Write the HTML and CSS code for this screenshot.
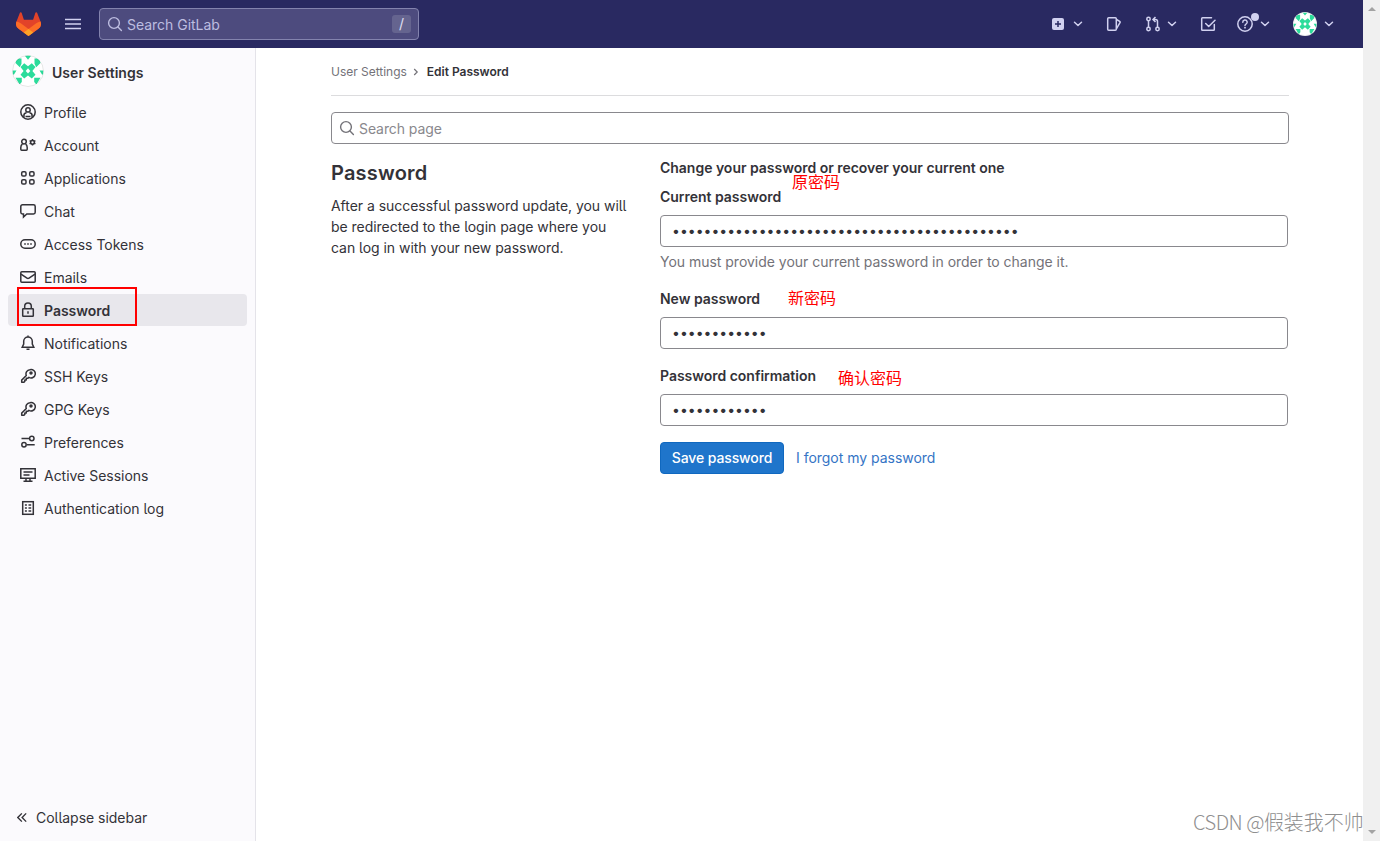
FILE: index.html
```html
<!DOCTYPE html>
<html lang="en">
<head>
<meta charset="utf-8">
<title>Edit Password · User Settings · GitLab</title>
<link rel="stylesheet" href="styles.css">
</head>
<body>
<svg class="defs" aria-hidden="true">
  <symbol id="chev" viewBox="0 0 10 6"><path d="M1.500 1.200 5 4.500 8.500 1.200" fill="none" stroke="currentColor" stroke-width="1.500" stroke-linecap="round" stroke-linejoin="round"/></symbol>
  <symbol id="search" viewBox="0 0 16 16"><circle cx="7" cy="7" r="5.400" fill="none" stroke="currentColor" stroke-width="1.400"/><path d="m11 11 3.400 3.400" fill="none" stroke="currentColor" stroke-width="1.400" stroke-linecap="round"/></symbol>
  <symbol id="key" viewBox="0 0 16 16"><path d="M9.900 1.700a4.200 4.200 0 1 1-1 7.600L7.700 10.300H6.300v1.700H4.800v1.400l-.9.900H1.700v-2.200l4.600-4.600A4.200 4.200 0 0 1 9.900 1.700Z" fill="none" stroke="currentColor" stroke-width="1.500" stroke-linejoin="round"/><circle cx="11" cy="5" r="1" fill="currentColor"/></symbol>
  <symbol id="avatar" viewBox="0 0 32 32">
    <clipPath id="round"><circle cx="16" cy="16" r="15.500"/></clipPath>
    <circle cx="16" cy="16" r="16" fill="#fff"/>
    <g clip-path="url(#round)" fill="#2bdc9b">
      <path d="M12.700.5h6.600L16 4.700ZM4.500 3.500h5v5.200l-1.700 3.500L3.500 8Zm23 0h-5v5.200l1.700 3.500L28.500 8ZM.5 15.500h4L2 19.500H.5Zm31 0h-4l2.500 4h1.500Z"/>
      <path d="M3.500 22.700h6.300v4.200l-2.200 2.600Zm25 0h-6.300v4.200l2.200 2.600Z"/>
      <path d="m12.200 8.200 3.800 3.100 3.800-3.100 3.700 3.800-3.100 3.900 3.100 3.900-3.700 3.700-3.800-3.100-3.800 3.100-3.700-3.700 3.100-3.900L8.500 12Z"/>
    </g>
    <path fill="#fff" d="m16 13.300 2.300 2.600-2.300 2.600-2.300-2.600Z"/>
    <circle cx="16" cy="16" r="15.500" fill="none" stroke="#000" stroke-opacity=".1"/>
  </symbol>
</svg>
<header class="topbar">
  <svg class="logo" viewBox="0 0 25 24"><path fill="#e24329" d="m24.500 9.500L21.100.7a.9.900 0 0 0-1.700.1L17.100 7.800H7.900L5.600.8a.9.900 0 0 0-1.700-.1L.5 9.500a6.300 6.300 0 0 0 2.100 7.300L12.500 24l9.900-7.200a6.300 6.300 0 0 0 2.100-7.300Z"/><path fill="#fc6d26" d="M24.500 9.500a11.400 11.400 0 0 0-4.600 2L12.500 17l-7.400-5.500a11.400 11.400 0 0 0-4.600-2 6.300 6.300 0 0 0 2.100 7.300l9.900 7.200 9.900-7.200a6.300 6.300 0 0 0 2.100-7.300Z"/><path fill="#fca326" d="m7.700 20.500 4.800 3.500 4.800-3.500-4.800-3.600Z"/></svg>
  <svg class="burger" viewBox="0 0 16 12"><path d="M0 1.500h16M0 6h16M0 10.500h16" stroke="currentColor" stroke-width="1.500"/></svg>
  <div class="global-search"><svg class="i16"><use href="#search"/></svg><span>Search GitLab</span><kbd>/</kbd></div>
  <nav class="tools">
    <span class="tool t-new"><svg class="i16" viewBox="0 0 16 16"><rect x="2" y="2" width="12" height="12" rx="2" fill="currentColor"/><path d="M8 5v6M5 8h6" stroke="#292961" stroke-width="1.500"/></svg><svg class="chev"><use href="#chev"/></svg></span>
    <span class="tool t-issues"><svg class="i16" viewBox="0 0 16 16" fill="none" stroke="currentColor" stroke-width="1.500" stroke-linejoin="round"><rect x="1.700" y="1.700" width="8.600" height="12.600" rx="1"/><path d="m10.500 3.500 3.200 1.800c.5.300.6.900.3 1.400l-3.500 6"/></svg></span>
    <span class="tool t-mr"><svg class="i16" viewBox="0 0 16 16" fill="none" stroke="currentColor" stroke-width="1.500"><circle cx="3.500" cy="3" r="1.700"/><circle cx="3.500" cy="13" r="1.700"/><circle cx="12.500" cy="13" r="1.700"/><path d="M3.500 5v6M12.500 11V5.500a2 2 0 0 0-2-2H8.500M10.500 1 8 3.500 10.500 6"/></svg><svg class="chev"><use href="#chev"/></svg></span>
    <span class="tool t-todo"><svg class="i16" viewBox="0 0 16 16" fill="none" stroke="currentColor" stroke-width="1.500" stroke-linecap="round" stroke-linejoin="round"><path d="M11.500 1.700h-9a.8.800 0 0 0-.8.800v11c0 .5.300.8.800.8h11c.5 0 .8-.3.800-.8V8.500M5.700 7.500l3 3 6.300-6.300"/></svg></span>
    <span class="tool t-help"><svg class="i16" viewBox="0 0 16 16" fill="none" stroke="currentColor" stroke-width="1.500"><circle cx="8" cy="8" r="7.200"/><path d="M5.800 6.300a2.200 2.200 0 1 1 3.200 1.900c-.7.400-1 .7-1 1.300" stroke-linecap="round"/><circle cx="8" cy="11.700" r=".9" fill="currentColor" stroke="none"/></svg><i class="dot"></i><svg class="chev"><use href="#chev"/></svg></span>
    <span class="tool t-user"><svg class="face"><use href="#avatar"/></svg><svg class="chev"><use href="#chev"/></svg></span>
  </nav>
</header>
<div class="scrollbar"><i class="up"></i><i class="down"></i></div>
<div class="layout">
  <aside class="sidebar">
    <div class="context"><svg class="avatar"><use href="#avatar"/></svg><strong>User Settings</strong></div>
    <ul class="menu">
      <li><svg viewBox="0 0 16 16"><circle cx="8" cy="8" r="7.200"/><circle cx="8" cy="5.900" r="2.200"/><path d="M3.900 13.500V12A3 3 0 0 1 6.500 8.700M12.100 13.500V12a3 3 0 0 0-2.600-3.300M5.500 12.500h5"/></svg><span>Profile</span></li>
      <li><svg viewBox="0 0 16 16"><circle cx="4" cy="4.600" r="2.300"/><path d="M2.500 7C1.500 7.600.8 8.800.8 10.500v1.700c0 .6.300 1 .9 1h4.600c.6 0 .9-.4.900-1v-1.700C7.200 8.800 6.500 7.600 5.500 7"/><circle cx="12.500" cy="5.300" r="1.900"/><path d="M12.500 2v1.500M12.500 7.100v1.500M9.600 3.700l1.300.7M14.100 6.200l1.300.7M15.400 3.700l-1.300.7M10.900 6.200l-1.300.7"/></svg><span>Account</span></li>
      <li><svg viewBox="0 0 16 16"><rect x="1.700" y="1.700" width="4.300" height="4.300" rx="1.300"/><rect x="9.700" y="1.700" width="4.300" height="4.300" rx="1.300"/><rect x="1.700" y="9.700" width="4.300" height="4.300" rx="1.300"/><rect x="9.700" y="9.700" width="4.300" height="4.300" rx="1.300"/></svg><span>Applications</span></li>
      <li><svg viewBox="0 0 16 16"><path d="M2.500 1.700h11c1 0 1.700.7 1.700 1.700v5.900c0 1-.7 1.700-1.700 1.700H6.800L3.500 14v-3h-1A1.700 1.700 0 0 1 .8 9.300V3.400c0-1 .7-1.700 1.700-1.700Z"/></svg><span>Chat</span></li>
      <li><svg viewBox="0 0 16 16"><rect x=".8" y="3.700" width="14.400" height="8.600" rx="4.200"/><path d="M4.200 8h1.600M7.200 8h1.600M10.200 8h1.600"/></svg><span>Access Tokens</span></li>
      <li><svg viewBox="0 0 16 16"><rect x=".8" y="2.700" width="14.400" height="10.600" rx="1"/><path d="m1 5.200 6 4c.6.400 1.400.4 2 0l6-4"/></svg><span>Emails</span></li>
      <li class="active"><svg viewBox="0 0 16 16"><rect x="2.700" y="6.700" width="10.600" height="7.600" rx=".6"/><path d="M4.700 6.500V4.300a3.300 3.300 0 0 1 6.600 0v2.200M8 9.300v2.400"/></svg><span>Password</span></li>
      <li><svg viewBox="0 0 16 16"><path d="M3.700 9V6.300a4.300 4.300 0 0 1 8.600 0V9l1.500 3.200H2.200ZM8 2V.5M6.500 14.200h3"/></svg><span>Notifications</span></li>
      <li><svg><use href="#key"/></svg><span>SSH Keys</span></li>
      <li><svg><use href="#key"/></svg><span>GPG Keys</span></li>
      <li><svg viewBox="0 0 16 16"><path d="M1.500 4.500h7.500M7 10.700h7.700"/><circle cx="11.800" cy="4.500" r="2.200"/><circle cx="4" cy="10.700" r="2.200"/></svg><span>Preferences</span></li>
      <li><svg viewBox="0 0 16 16"><path d="M.8 1.700h14.400v9.600H.8ZM3.500 5h9M3.500 8h6M6 11.500v2.500M10 11.500v2.500M3.500 14.200h9"/></svg><span>Active Sessions</span></li>
      <li><svg viewBox="0 0 16 16"><rect x="2.700" y="1.700" width="10.600" height="12.600"/><path d="M4.900 5h2M8.500 5h2.700M4.900 8h2M8.500 8h2.700M4.900 11h2M8.500 11h2.700"/></svg><span>Authentication log</span></li>
    </ul>
    <div class="collapse"><svg viewBox="0 0 12 12"><path d="M5.300 1.500.9 6l4.400 4.500M10 1.500 5.600 6l4.400 4.500"/></svg><span>Collapse sidebar</span></div>
  </aside>
  <main class="content">
    <nav class="crumbs"><span class="c1">User Settings</span><svg viewBox="0 0 6 8"><path d="m1.200 1 3 3-3 3"/></svg><b>Edit Password</b></nav>
    <div class="page-search"><svg class="i16"><use href="#search"/></svg><span>Search page</span></div>
    <div class="columns">
      <section class="intro"><h1>Password</h1><p><span>After a successful password update, you will</span><br><span>be redirected to the login page where you</span><br><span>can log in with your new password.</span></p></section>
      <form class="form">
        <h2>Change your password or recover your current one</h2>
        <label class="l1">Current password</label>
        <input type="password" value="glpat0123456789glpat0123456789glpat012345678">
        <p class="help">You must provide your current password in order to change it.</p>
        <label class="l2">New password</label>
        <input type="password" value="newpassword1">
        <label class="l3">Password confirmation</label>
        <input type="password" value="newpassword1">
        <div class="actions"><button type="button">Save password</button><a>I forgot my password</a></div>
      </form>
    </div>
  </main>
</div>
<div class="mark-box"></div>
<span class="note n1">原密码</span>
<span class="note n2">新密码</span>
<span class="note n3">确认密码</span>
<span class="watermark"><span class="latin">CSDN @</span>假装我不帅</span>
</body>
</html>
```

FILE: styles.css
```css
* { box-sizing: border-box; }
body { margin: 0; height: 841px; overflow: hidden; background: #fff; color: #333238; font: 14px/21px Inter, "Noto Sans", sans-serif; font-feature-settings: "cv05"; letter-spacing: -0.02px; display: grid; grid-template: 48px 793px / 1363px 17px; }
.defs { position: absolute; width: 0; height: 0; }
svg { display: block; flex: none; }
.i16 { width: 16px; height: 16px; }
.topbar { background: #292961; color: #d1d1f0; display: flex; align-items: center; padding-left: 16px; }
.logo { width: 25px; height: 24px; }
.burger { width: 16px; height: 12px; margin-left: 24px; }
.global-search { width: 320px; height: 32px; margin-left: 18px; padding: 0 7px; display: flex; align-items: center; border: 1px solid #8383ae; border-radius: 4px; background: #4d4b7e; color: #bdbde0; font-size: 14px; }
.global-search span { margin: 1px 0 0 4px; flex: 1; }
.global-search kbd { width: 19px; height: 18px; border-radius: 3px; background: #65648f; color: #e0e0f4; font: 14px/17px Inter, sans-serif; text-align: center; }
.tools { display: flex; align-items: center; margin-left: 631px; }
.tool { display: flex; align-items: center; position: relative; }
.chev { width: 10px; height: 6px; }
.t-new .chev { margin-left: 7px; }
.t-issues { margin-left: 23px; }
.t-mr { margin-left: 23px; }
.t-mr .chev { margin-left: 6px; }
.t-todo { margin-left: 23px; }
.t-help { margin-left: 21px; }
.t-help .chev { margin-left: 7px; }
.dot { position: absolute; left: 14px; top: -3px; width: 8px; height: 8px; border-radius: 50%; background: #d1d1f0; }
.t-user { margin-left: 23px; }
.t-user .chev { margin-left: 7px; }
.face { width: 24px; height: 24px; }
.scrollbar { grid-column: 2; grid-row: 1 / 3; background: #f0f0f0; display: flex; flex-direction: column; align-items: center; justify-content: space-between; padding: 7px 0 7px; }
.scrollbar i { border: 4px solid transparent; }
.scrollbar .up { border-top: 0; border-bottom-color: #a3a3a3; }
.scrollbar .down { border-bottom: 0; border-top-color: #a3a3a3; }
.layout { display: flex; grid-row: 2; grid-column: 1; }
.sidebar { width: 256px; background: #fbfafd; border-right: 1px solid #e4e3e9; display: flex; flex-direction: column; padding: 8px 8px 13px; }
.context { display: flex; align-items: center; height: 32px; padding-left: 4px; gap: 8px; }
.context strong { font-weight: 600; letter-spacing: 0.05px; }
.avatar { width: 32px; height: 32px; position: relative; top: -1px; }
.menu { list-style: none; margin: 8px 0 0; padding: 0; display: flex; flex-direction: column; gap: 1px; }
.menu li { height: 32px; display: flex; align-items: center; gap: 8px; padding-left: 12px; border-radius: 4px; }
.menu svg { width: 16px; height: 16px; fill: none; stroke: currentColor; stroke-width: 1.5; }
.menu .active { background: #e8e7ec; font-weight: 600; }
.collapse { margin-top: auto; display: flex; align-items: center; gap: 8px; padding-left: 9px; }
.collapse svg { width: 11px; height: 11px; fill: none; stroke: currentColor; stroke-width: 1.5; }
.content { width: 958px; margin-left: 75px; }
.crumbs { height: 48px; border-bottom: 1px solid #dcdcde; display: flex; align-items: center; font-size: 12px; color: #737278; }
.crumbs svg { width: 6px; height: 8px; margin: 0 8px 0 6px; fill: none; stroke: currentColor; stroke-width: 1.2; }
.crumbs b { font-weight: 600; color: #333238; }
.page-search { margin-top: 16px; height: 32px; border: 1px solid #89888d; border-radius: 4px; display: flex; align-items: center; padding-left: 7px; gap: 4px; color: #737278; }
.page-search span { color: #89888d; padding-top: 1px; letter-spacing: -0.08px; }
.columns { display: flex; }
.intro { width: 329px; }
h1 { margin: 16px 0 0; font-size: 20px; line-height: 26px; font-weight: 600; letter-spacing: 0.2px; }
.intro p { margin: 9px 0 0; white-space: nowrap; letter-spacing: -0.035px; }
.form { width: 628px; display: flex; flex-direction: column; }
h2 { margin: 13px 0 0; font-size: 14px; line-height: 21px; font-weight: 600; }
label { font-weight: 600; line-height: 21px; }
.l1 { margin: 8px 0 8px; }
.l2 { margin: 16px 0 8px; }
.l3 { margin: 16px 0 8px; }
input { height: 32px; border: 1px solid #89888d; border-radius: 4px; padding: 0 11px 2px; font: 14px Inter, sans-serif; color: #333238; background: #fff; }
.help { margin: 4px 0 0; color: #737278; }
.actions { display: flex; align-items: center; gap: 12px; margin-top: 16px; }
button { width: 124px; height: 32px; padding: 0 0 2px; border: 1px solid #1068bf; border-radius: 4px; background: #1f75cb; color: #fff; font: 500 14px Inter, sans-serif; letter-spacing: -0.12px; }
.actions a { color: #3574c5; margin-top: -1px; }
.mark-box { position: absolute; left: 17px; top: 287px; width: 120px; height: 39px; border: 2px solid #f00; }
.note { position: absolute; color: #f00; font: 16px/20px "Noto Sans CJK SC", sans-serif; letter-spacing: 0; white-space: nowrap; }
.n1 { left: 792px; top: 171px; }
.n2 { left: 788px; top: 287px; }
.n3 { left: 838px; top: 367px; }
.watermark { position: absolute; left: 1193px; top: 808px; color: #8f8f8f; font: 300 20px/28px "Noto Sans CJK SC", sans-serif; letter-spacing: 0; white-space: nowrap; }
.latin { letter-spacing: -0.5px; }
```
